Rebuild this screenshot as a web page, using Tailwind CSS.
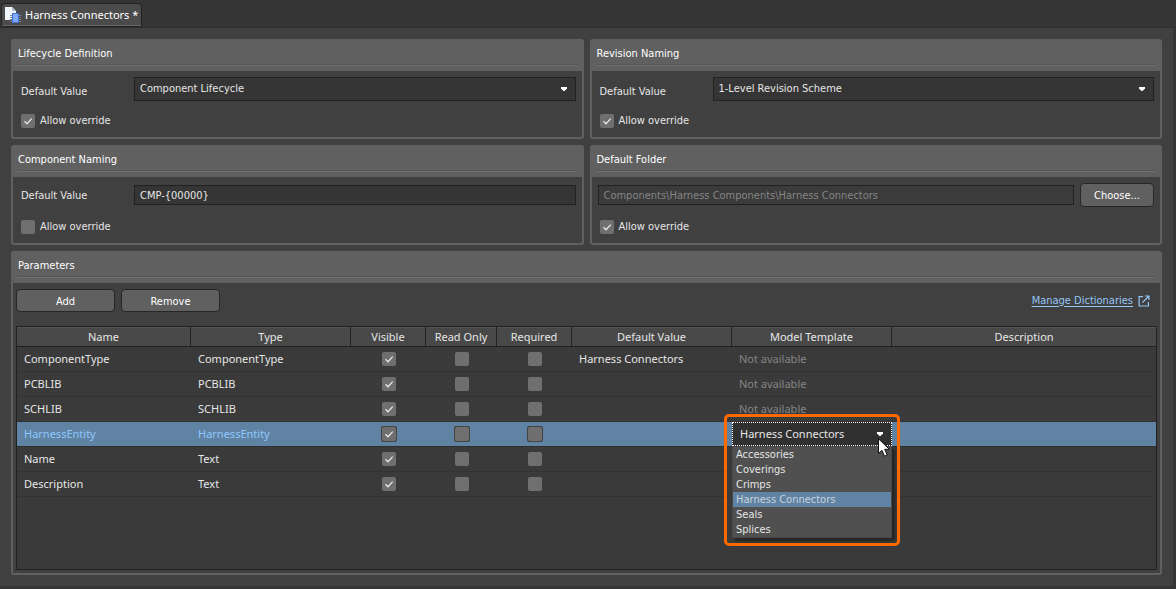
<!DOCTYPE html>
<html lang="en">
<head>
    <meta charset="UTF-8">
    <meta name="viewport" content="width=device-width, initial-scale=1.0">
    <title>Harness Connectors</title>
    <script src="https://cdn.jsdelivr.net/npm/@tailwindcss/browser@4"></script>
</head>
<body class="min-h-screen flex flex-col bg-[#353535] text-[11px] leading-4 text-[#e6e6e6] font-['DejaVu_Sans_Condensed','Noto_Sans',sans-serif]">

    <!-- Shared icons -->
    <svg class="hidden">
        <symbol id="check" viewBox="0 0 14 14">
            <path d="M3.5 7.2 6 9.7 10.7 4.6" fill="none" stroke="#e8e8e8" stroke-width="1.3"/>
        </symbol>
        <symbol id="arrow" viewBox="0 0 8 5">
            <path d="M1 0h6v1.500L4.500 4h-1L1 1.500z" fill="#fff"/>
        </symbol>
    </svg>

    <!-- Document tabs -->
    <nav class="flex h-7 items-end border-b border-[#303030] px-px">
        <a href="#" class="flex h-6 items-center gap-1 rounded-t-sm border border-[#222] bg-[#4b4b4b] px-[3px] font-['Noto_Sans',sans-serif] text-white shadow-[inset_0_-1px_#666]">
            <svg class="h-4 w-4" viewBox="0 0 16 16">
                <path d="M0 0h7l4 4v9H0z" fill="#eef6fb"/>
                <path d="M7 0l4 4H7z" fill="#a9bcc8"/>
                <path d="M5 8.500h11M5 10.500h11M5 12.500h11M5 14.500h11" stroke="#7c8894"/>
                <rect x="7.500" y="6.500" width="6" height="9" fill="#82a9f5" stroke="#3d6fe0"/>
            </svg>
            Harness Connectors *
        </a>
    </nav>

    <main class="flex flex-1 flex-col gap-1.5 border-r-3 border-b-3 border-[#363636] bg-[#404040] p-[11px]">

        <div class="grid grid-cols-2 gap-1.5">
            <section class="rounded-[3px] border-2 border-t-0 border-[#606060]">
                <header class="bg-[#606060] px-1 pb-[5px]">
                    <h2 class="border-b border-[#6e6e6e] px-px pt-[7px] pb-[3px] text-white shadow-[inset_0_-1px_#555]">Lifecycle Definition</h2>
                </header>
                <div class="px-1.5 pt-1.5 pb-2">
                    <div class="flex h-6 items-center">
                        <label for="lifecycle" class="w-[115px] pl-0.5 pt-1.5">Default Value</label>
                        <div class="relative flex-1">
                            <select id="lifecycle" class="block h-6 w-full appearance-none border border-[#222] bg-[#353535] px-[5px]">
                                <option>Component Lifecycle</option>
                            </select>
                            <svg class="pointer-events-none absolute right-2 top-2.5 h-[5px] w-2"><use href="#arrow"/></svg>
                        </div>
                    </div>
                    <label class="mt-3 flex w-fit items-center gap-[5px] pl-0.5">
                        <span class="grid">
                            <input type="checkbox" checked class="peer col-start-1 row-start-1 h-3.5 w-3.5 appearance-none rounded-xs bg-[#6f6f6f]">
                            <svg class="invisible col-start-1 row-start-1 h-3.5 w-3.5 peer-checked:visible"><use href="#check"/></svg>
                        </span>
                        Allow override
                    </label>
                </div>
            </section>

            <section class="rounded-[3px] border-2 border-t-0 border-[#606060]">
                <header class="bg-[#606060] px-1 pb-[5px]">
                    <h2 class="border-b border-[#6e6e6e] px-px pt-[7px] pb-[3px] text-white shadow-[inset_0_-1px_#555]">Revision Naming</h2>
                </header>
                <div class="px-1.5 pt-1.5 pb-2">
                    <div class="flex h-6 items-center">
                        <label for="revision" class="w-[115px] pl-0.5 pt-1.5">Default Value</label>
                        <div class="relative flex-1">
                            <select id="revision" class="block h-6 w-full appearance-none border border-[#222] bg-[#353535] px-[5px]">
                                <option>1-Level Revision Scheme</option>
                            </select>
                            <svg class="pointer-events-none absolute right-2 top-2.5 h-[5px] w-2"><use href="#arrow"/></svg>
                        </div>
                    </div>
                    <label class="mt-3 flex w-fit items-center gap-[5px] pl-0.5">
                        <span class="grid">
                            <input type="checkbox" checked class="peer col-start-1 row-start-1 h-3.5 w-3.5 appearance-none rounded-xs bg-[#6f6f6f]">
                            <svg class="invisible col-start-1 row-start-1 h-3.5 w-3.5 peer-checked:visible"><use href="#check"/></svg>
                        </span>
                        Allow override
                    </label>
                </div>
            </section>

            <section class="rounded-[3px] border-2 border-t-0 border-[#606060]">
                <header class="bg-[#606060] px-1 pb-[5px]">
                    <h2 class="border-b border-[#6e6e6e] px-px pt-[7px] pb-[3px] text-white shadow-[inset_0_-1px_#555]">Component Naming</h2>
                </header>
                <div class="px-1.5 pt-1.5 pb-2">
                    <div class="flex h-6 items-center">
                        <label for="naming" class="w-[115px] pl-0.5 pt-0.5">Default Value</label>
                        <input id="naming" type="text" value="CMP-{00000}" class="h-5 min-w-0 flex-1 border border-[#222] bg-[#353535] px-[5px]">
                    </div>
                    <label class="mt-3 flex w-fit items-center gap-[5px] pl-0.5">
                        <span class="grid">
                            <input type="checkbox" class="peer col-start-1 row-start-1 h-3.5 w-3.5 appearance-none rounded-xs bg-[#6f6f6f]">
                            <svg class="invisible col-start-1 row-start-1 h-3.5 w-3.5 peer-checked:visible"><use href="#check"/></svg>
                        </span>
                        Allow override
                    </label>
                </div>
            </section>

            <section class="rounded-[3px] border-2 border-t-0 border-[#606060]">
                <header class="bg-[#606060] px-1 pb-[5px]">
                    <h2 class="border-b border-[#6e6e6e] px-px pt-[7px] pb-[3px] text-white shadow-[inset_0_-1px_#555]">Default Folder</h2>
                </header>
                <div class="px-1.5 pt-1.5 pb-2">
                    <div class="flex h-6 items-center gap-1.5">
                        <input type="text" aria-label="Default Folder" disabled value="Components\Harness Components\Harness Connectors" class="h-5 min-w-0 flex-1 border border-[#222] bg-[#3b3b3b] px-[5px] text-[#858585]">
                        <button type="button" class="h-6 w-[74px] rounded-sm border border-[#262626] bg-[#606060] pt-0.5 text-white">Choose...</button>
                    </div>
                    <label class="mt-3 flex w-fit items-center gap-[5px] pl-0.5">
                        <span class="grid">
                            <input type="checkbox" checked class="peer col-start-1 row-start-1 h-3.5 w-3.5 appearance-none rounded-xs bg-[#6f6f6f]">
                            <svg class="invisible col-start-1 row-start-1 h-3.5 w-3.5 peer-checked:visible"><use href="#check"/></svg>
                        </span>
                        Allow override
                    </label>
                </div>
            </section>
        </div>

        <section class="flex flex-1 flex-col rounded-[3px] border-2 border-t-0 border-[#606060]">
            <header class="bg-[#606060] px-1 pb-[5px]">
                <h2 class="border-b border-[#6e6e6e] px-px pt-[7px] pb-[3px] text-white shadow-[inset_0_-1px_#555]">Parameters</h2>
            </header>
            <div class="flex flex-1 flex-col gap-3.5 px-[3px] pt-1.5 pb-[3px]">
                <div class="flex items-center gap-1.5">
                    <button type="button" class="h-[23px] w-[99px] rounded-sm border border-[#262626] bg-[#606060] pt-0.5 text-white">Add</button>
                    <button type="button" class="h-[23px] w-[99px] rounded-sm border border-[#262626] bg-[#606060] pt-0.5 text-white">Remove</button>
                    <a href="#" class="ml-auto flex items-center gap-[5px] pr-[7px] text-[#93c6f5]">
                        <span class="underline underline-offset-2">Manage Dictionaries</span>
                        <svg class="h-3 w-3" viewBox="0 0 12 12" fill="none" stroke="#93c6f5" stroke-width="1.2">
                            <path d="M5 1.600H1.100V11H10.400V7M7 1h4v4M11 1 4.500 7.500"/>
                        </svg>
                    </a>
                </div>

                <div class="flex-1 border border-[#222] bg-[#3a3a3a] font-['Noto_Sans',sans-serif]">
                    <table class="w-full table-fixed border-separate border-spacing-0">
                        <colgroup>
                            <col class="w-[174px]"><col class="w-40"><col class="w-[75px]"><col class="w-[71px]"><col class="w-[75px]"><col class="w-40"><col class="w-40"><col>
                        </colgroup>
                        <thead>
                            <tr class="h-5 bg-[#484848] *:border-r *:border-b *:border-[#222] *:p-0 *:font-normal *:shadow-[inset_0_1px_#555] *:last:border-r-0">
                                <th>Name</th><th>Type</th><th>Visible</th><th>Read Only</th><th>Required</th><th>Default Value</th><th>Model Template</th><th>Description</th>
                            </tr>
                        </thead>
                        <tbody id="params"></tbody>
                    </table>
                </div>
            </div>
        </section>
    </main>

    <!-- Opened model template picker -->
    <template id="picker">
        <div class="relative">
            <select aria-label="Model Template" class="block h-6 w-full appearance-none border border-dotted border-white bg-[#303030] px-[7px]">
                <option>Harness Connectors</option>
            </select>
            <svg class="pointer-events-none absolute right-2 top-2.5 h-[5px] w-2"><use href="#arrow"/></svg>
            <ul role="listbox" class="absolute inset-x-0 top-full z-10 border border-[#484848] bg-[#505050] font-['DejaVu_Sans_Condensed',sans-serif] leading-[15px] shadow-[3px_3px_3px_#0006] *:px-[3px]">
                <li role="option">Accessories</li>
                <li role="option">Coverings</li>
                <li role="option">Crimps</li>
                <li role="option" aria-selected="true" class="bg-[#6083a3] text-[#c8d2dc]">Harness Connectors</li>
                <li role="option">Seals</li>
                <li role="option">Splices</li>
            </ul>
            <div class="pointer-events-none absolute -inset-x-2 -top-2 z-20 h-[132px] rounded-[5px] border-3 border-[#ff6a00]"></div>
            <svg class="pointer-events-none absolute right-0.5 top-4 z-30 h-[19px] w-3" viewBox="0 0 12 19">
                <path d="M0.500 0.800V15.500L3.900 12.300 6.500 18.200 9.200 17 6.700 11.300H11.400z" fill="#fff" stroke="#111" stroke-width="1"/>
            </svg>
        </div>
    </template>

    <script>
        const rows = [
            { name: 'ComponentType', type: 'ComponentType', value: 'Harness Connectors', model: 'Not available' },
            { name: 'PCBLIB', type: 'PCBLIB', value: '', model: 'Not available' },
            { name: 'SCHLIB', type: 'SCHLIB', value: '', model: 'Not available' },
            { name: 'HarnessEntity', type: 'HarnessEntity', value: '', model: '', selected: true },
            { name: 'Name', type: 'Text', value: '', model: '' },
            { name: 'Description', type: 'Text', value: '', model: '' }
        ];

        function checkbox(label, checked, selected) {
            return `<td><span class="mx-auto grid h-4 w-4 place-items-center rounded-xs ${selected ? 'bg-[#444]' : ''}">
                <input type="checkbox" aria-label="${label}" ${checked ? 'checked' : ''} class="peer col-start-1 row-start-1 h-3.5 w-3.5 appearance-none rounded-xs bg-[#6f6f6f]">
                <svg class="invisible col-start-1 row-start-1 h-3.5 w-3.5 peer-checked:visible"><use href="#check"/></svg>
            </span></td>`;
        }

        document.getElementById('params').innerHTML = rows.map(row => `
            <tr class="h-[25px] *:border-b *:p-0 ${row.selected ? 'bg-[#6083a3] *:border-[#2e2e2e]' : '*:border-[#333]'}">
                <td class="${row.selected ? 'text-[#8fc8ff]' : ''}"><span class="px-[7px]">${row.name}</span></td>
                <td class="${row.selected ? 'text-[#8fc8ff]' : ''}"><span class="px-[7px]">${row.type}</span></td>
                ${checkbox('Visible', true, row.selected)}
                ${checkbox('Read Only', false, row.selected)}
                ${checkbox('Required', false, row.selected)}
                <td><span class="px-[7px]">${row.value}</span></td>
                <td class="text-[#858585]">${row.selected ? '<div id="slot" class="text-[#e6e6e6]"></div>' : `<span class="px-[7px]">${row.model}</span>`}</td>
                <td></td>
            </tr>`).join('');

        document.getElementById('slot').append(document.getElementById('picker').content.cloneNode(true));
    </script>
</body>
</html>
